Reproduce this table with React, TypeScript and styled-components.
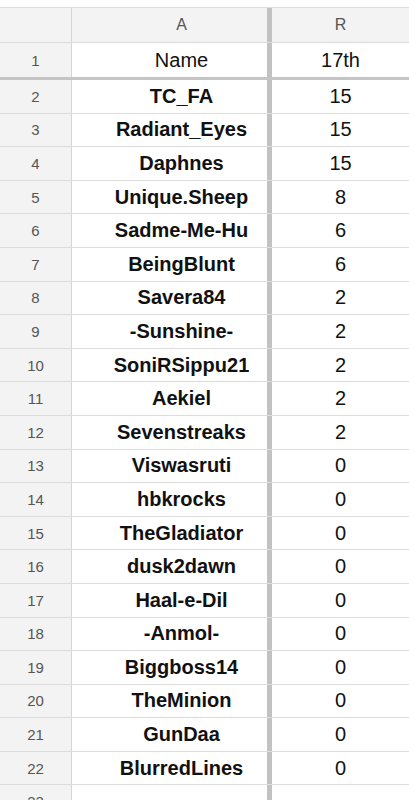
import styled, { createGlobalStyle } from "styled-components";

const GlobalStyle = createGlobalStyle`
  html, body {
    margin: 0;
    padding: 0;
    background: #ffffff;
    font-family: "Liberation Sans", Arial, sans-serif;
  }
`;

const Sheet = styled.div`
  width: 409px;
  height: 800px;
  overflow: hidden;
  padding-top: 7px;
  box-sizing: border-box;
  background: #ffffff;
`;

const Row = styled.div<{ h: number; thick?: boolean }>`
  display: grid;
  grid-template-columns: 72px 200px 1fr;
  height: ${({ h }) => h}px;
  box-sizing: border-box;
  border-bottom: ${({ thick }) => (thick ? "3px solid #c4c4c4" : "1px solid #dcdcdc")};
`;

const TopRow = styled(Row)`
  border-top: 1px solid #dcdcdc;
  background: #f3f3f3;
`;

const RowHead = styled.div`
  display: flex;
  align-items: center;
  justify-content: center;
  background: #f3f3f3;
  border-right: 1px solid #d6d6d6;
  color: #555555;
  font-size: 15px;
`;

const ColHead = styled.div<{ frozen?: boolean }>`
  display: flex;
  align-items: center;
  justify-content: center;
  color: #555555;
  font-size: 16px;
  padding-left: ${({ frozen }) => (frozen ? "24px" : "0")};
  border-right: ${({ frozen }) => (frozen ? "5px solid #c2c2c2" : "none")};
`;

const Cell = styled.div<{ frozen?: boolean; bold?: boolean }>`
  display: flex;
  align-items: center;
  justify-content: center;
  color: #111111;
  font-size: 20px;
  font-weight: ${({ bold }) => (bold ? 700 : 400)};
  white-space: nowrap;
  padding-left: ${({ frozen }) => (frozen ? "24px" : "0")};
  border-right: ${({ frozen }) => (frozen ? "5px solid #c2c2c2" : "none")};
`;

const rows: [string, string][] = [
  ["TC_FA", "15"],
  ["Radiant_Eyes", "15"],
  ["Daphnes", "15"],
  ["Unique.Sheep", "8"],
  ["Sadme-Me-Hu", "6"],
  ["BeingBlunt", "6"],
  ["Savera84", "2"],
  ["-Sunshine-", "2"],
  ["SoniRSippu21", "2"],
  ["Aekiel", "2"],
  ["Sevenstreaks", "2"],
  ["Viswasruti", "0"],
  ["hbkrocks", "0"],
  ["TheGladiator", "0"],
  ["dusk2dawn", "0"],
  ["Haal-e-Dil", "0"],
  ["-Anmol-", "0"],
  ["Biggboss14", "0"],
  ["TheMinion", "0"],
  ["GunDaa", "0"],
  ["BlurredLines", "0"],
];

export default function App() {
  return (
    <>
      <GlobalStyle />
      <Sheet>
        <TopRow h={36}>
          <RowHead />
          <ColHead frozen>A</ColHead>
          <ColHead>R</ColHead>
        </TopRow>
        <Row h={37} thick>
          <RowHead>1</RowHead>
          <Cell frozen>Name</Cell>
          <Cell>17th</Cell>
        </Row>
        {rows.map(([name, score], i) => (
          <Row h={33.6} key={name}>
            <RowHead>{i + 2}</RowHead>
            <Cell frozen bold>
              {name}
            </Cell>
            <Cell>{score}</Cell>
          </Row>
        ))}
        <Row h={33.6}>
          <RowHead>23</RowHead>
          <Cell frozen />
          <Cell />
        </Row>
      </Sheet>
    </>
  );
}
